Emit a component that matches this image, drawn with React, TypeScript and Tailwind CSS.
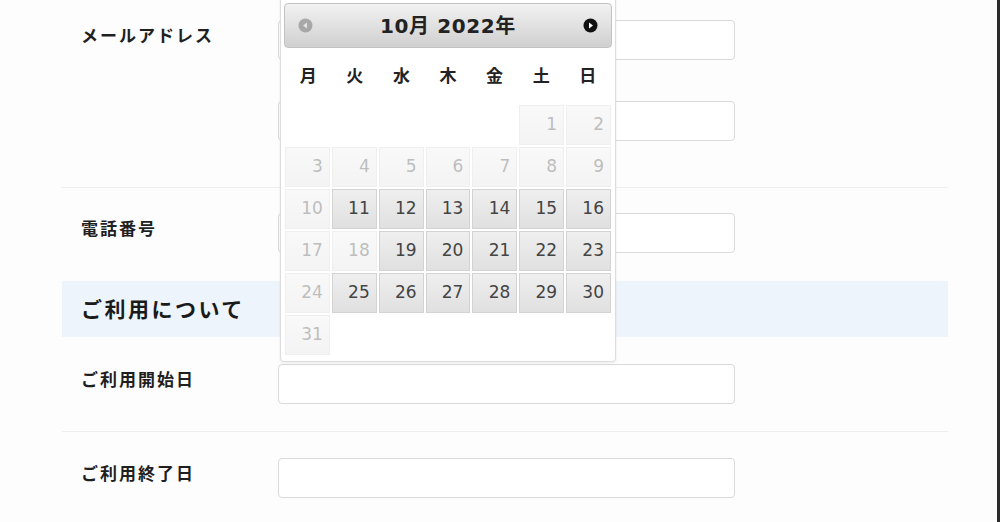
import React from 'react';

type Day = { n: number; enabled: boolean } | null;

const disabledDays = [1, 2, 3, 4, 5, 6, 7, 8, 9, 10, 17, 18, 24, 31];

// October 2022 starts on Saturday (Monday-first week)
const buildDays = (): Day[] => {
  const cells: Day[] = Array.from({ length: 5 }, () => null);
  for (let d = 1; d <= 31; d++) {
    cells.push({ n: d, enabled: !disabledDays.includes(d) });
  }
  return cells;
};

const weekDays = ['月', '火', '水', '木', '金', '土', '日'];

function CircleArrow({ dir, dark }: { dir: 'left' | 'right'; dark: boolean }) {
  return (
    <svg width="15" height="15" viewBox="0 0 15 15">
      <circle cx="7.5" cy="7.5" r="7" fill={dark ? '#111111' : '#9a9a9a'} />
      {dir === 'right' ? (
        <path d="M6 4.5 L10 7.5 L6 10.5 Z" fill="#ffffff" />
      ) : (
        <path d="M9 4.5 L5 7.5 L9 10.5 Z" fill="#e4e4e4" />
      )}
    </svg>
  );
}

function TextInput() {
  return <div className="w-[457px] h-[40px] rounded-[4px] border border-[#dadada] bg-white" />;
}

function Label({ children }: { children: React.ReactNode }) {
  return (
    <div className="w-[216px] shrink-0 pl-[19px] mt-[3px] text-[17px] leading-[24px] font-bold tracking-[2px] text-[#1f1f1f]">
      {children}
    </div>
  );
}

function DatePicker() {
  const days = buildDays();
  return (
    <div className="absolute left-[280px] top-[-1px] w-[336px] bg-white border border-[#dddddd] rounded-b-[4px] px-[3px] pt-[3px] pb-[6px] shadow-[0_1px_3px_rgba(0,0,0,0.08)] font-['DejaVu_Sans','Noto_Sans_CJK_JP',sans-serif]">
      <div className="h-[45px] rounded-[4px] border border-[#c2c2c2] bg-gradient-to-b from-[#f2f2f2] to-[#d0d0d0] flex items-center justify-between px-[13px]">
        <span className="opacity-80">
          <CircleArrow dir="left" dark={false} />
        </span>
        <span className="text-[20px] font-bold text-[#222222] tracking-[0.6px]">10月 2022年</span>
        <CircleArrow dir="right" dark />
      </div>
      <div className="h-[57px] pb-[3px] mx-[1px] grid grid-cols-7 items-center text-center text-[17px] font-bold text-[#222222] font-['Noto_Sans_CJK_JP',sans-serif]">
        {weekDays.map(w => (
          <span key={w}>{w}</span>
        ))}
      </div>
      <div className="mx-[1px] grid grid-cols-7 gap-[2px]">
        {days.map((d, i) =>
          d ? (
            <div
              key={i}
              className={`h-[40px] border border-[#d3d3d3] bg-gradient-to-b from-[#efefef] to-[#e0e0e0] text-[#444444] text-[17px] flex items-center justify-end pr-[6px] ${
                d.enabled ? '' : 'opacity-35'
              }`}
            >
              {d.n}
            </div>
          ) : (
            <div key={i} className="h-[40px]" />
          )
        )}
      </div>
    </div>
  );
}

export default function App() {
  return (
    <div className="relative w-[1000px] h-[522px] overflow-hidden bg-[#fdfdfd] border-r-[3px] border-[#2a2a2a] font-['Noto_Sans_CJK_JP',sans-serif]">
      <div className="ml-[62px] w-[886px]">
        {/* Email */}
        <div className="flex items-start pt-[20px] pb-[46px] border-b border-[#eeeeee]">
          <Label>メールアドレス</Label>
          <div className="flex flex-col gap-[41px]">
            <TextInput />
            <TextInput />
          </div>
        </div>

        {/* Phone */}
        <div className="flex items-start pt-[25px] pb-[28px]">
          <Label>電話番号</Label>
          <TextInput />
        </div>

        {/* Section header */}
        <div className="h-[56px] bg-[#edf4fb] flex items-center pl-[19px] pb-[1px] text-[21px] font-bold tracking-[2.5px] text-[#1a1a1a]">
          ご利用について
        </div>

        {/* Start date */}
        <div className="flex items-start pt-[27px] pb-[27px] border-b border-[#eeeeee]">
          <Label>ご利用開始日</Label>
          <TextInput />
        </div>

        {/* End date */}
        <div className="flex items-start pt-[26px]">
          <Label>ご利用終了日</Label>
          <TextInput />
        </div>
      </div>

      <DatePicker />
    </div>
  );
}
